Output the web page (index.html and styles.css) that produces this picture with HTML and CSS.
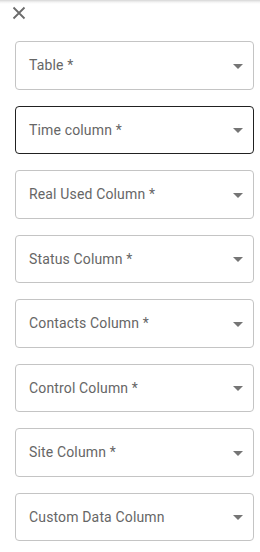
FILE: index.html
```html
<!DOCTYPE html>
<html>
<head>
<meta charset="utf-8">
<link rel="stylesheet" href="styles.css">
</head>
<body>
<div class="panel">
  <div class="topbar">
    <svg class="close" width="14" height="14" viewBox="0 0 14 14"><path d="M1.5 1.5L12.5 12.5M12.5 1.5L1.5 12.5" stroke="#6b6b6b" stroke-width="1.8" fill="none"/></svg>
  </div>
  <div class="fields">
    <div class="field"><span class="label">Table *</span><svg class="arrow" width="10" height="5" viewBox="0 0 10 5"><path d="M0 0L5 5L10 0Z"/></svg></div>
    <div class="field hover"><span class="label">Time column *</span><svg class="arrow" width="10" height="5" viewBox="0 0 10 5"><path d="M0 0L5 5L10 0Z"/></svg></div>
    <div class="field"><span class="label">Real Used Column *</span><svg class="arrow" width="10" height="5" viewBox="0 0 10 5"><path d="M0 0L5 5L10 0Z"/></svg></div>
    <div class="field"><span class="label">Status Column *</span><svg class="arrow" width="10" height="5" viewBox="0 0 10 5"><path d="M0 0L5 5L10 0Z"/></svg></div>
    <div class="field"><span class="label">Contacts Column *</span><svg class="arrow" width="10" height="5" viewBox="0 0 10 5"><path d="M0 0L5 5L10 0Z"/></svg></div>
    <div class="field"><span class="label">Control Column *</span><svg class="arrow" width="10" height="5" viewBox="0 0 10 5"><path d="M0 0L5 5L10 0Z"/></svg></div>
    <div class="field"><span class="label">Site Column *</span><svg class="arrow" width="10" height="5" viewBox="0 0 10 5"><path d="M0 0L5 5L10 0Z"/></svg></div>
    <div class="field"><span class="label">Custom Data Column</span><svg class="arrow" width="10" height="5" viewBox="0 0 10 5"><path d="M0 0L5 5L10 0Z"/></svg></div>
  </div>
</div>
</body>
</html>
```
FILE: styles.css
```css
html, body {
  margin: 0;
  padding: 0;
  background: #fff;
}
body {
  font-family: Roboto, "Liberation Sans", sans-serif;
  width: 260px;
  height: 552px;
  overflow: hidden;
  background: linear-gradient(to bottom, rgba(0,0,0,0.16) 0px, rgba(0,0,0,0.05) 2px, rgba(0,0,0,0) 4px) no-repeat, #fff;
  background-size: 100% 4px, auto;
}
.panel {
  display: flex;
  flex-direction: column;
}
.topbar {
  height: 41px;
  display: flex;
  align-items: flex-start;
  padding-left: 12px;
  box-sizing: border-box;
}
.close {
  margin-top: 6px;
  display: block;
}
.fields {
  display: flex;
  flex-direction: column;
  gap: 16px;
  padding-left: 15px;
}
.field {
  box-sizing: border-box;
  width: 239px;
  height: 48.5px;
  border: 1px solid #c4c4c4;
  border-radius: 4px;
  display: flex;
  align-items: center;
  padding-left: 13px;
  padding-right: 10px;
}
.field.hover {
  border-color: rgba(0,0,0,0.87);
}
.label {
  font-size: 14px;
  color: #666;
  letter-spacing: 0.15px;
  line-height: 16px;
}
.arrow {
  margin-left: auto;
  margin-top: 2px;
  fill: #757575;
  display: block;
}
```
